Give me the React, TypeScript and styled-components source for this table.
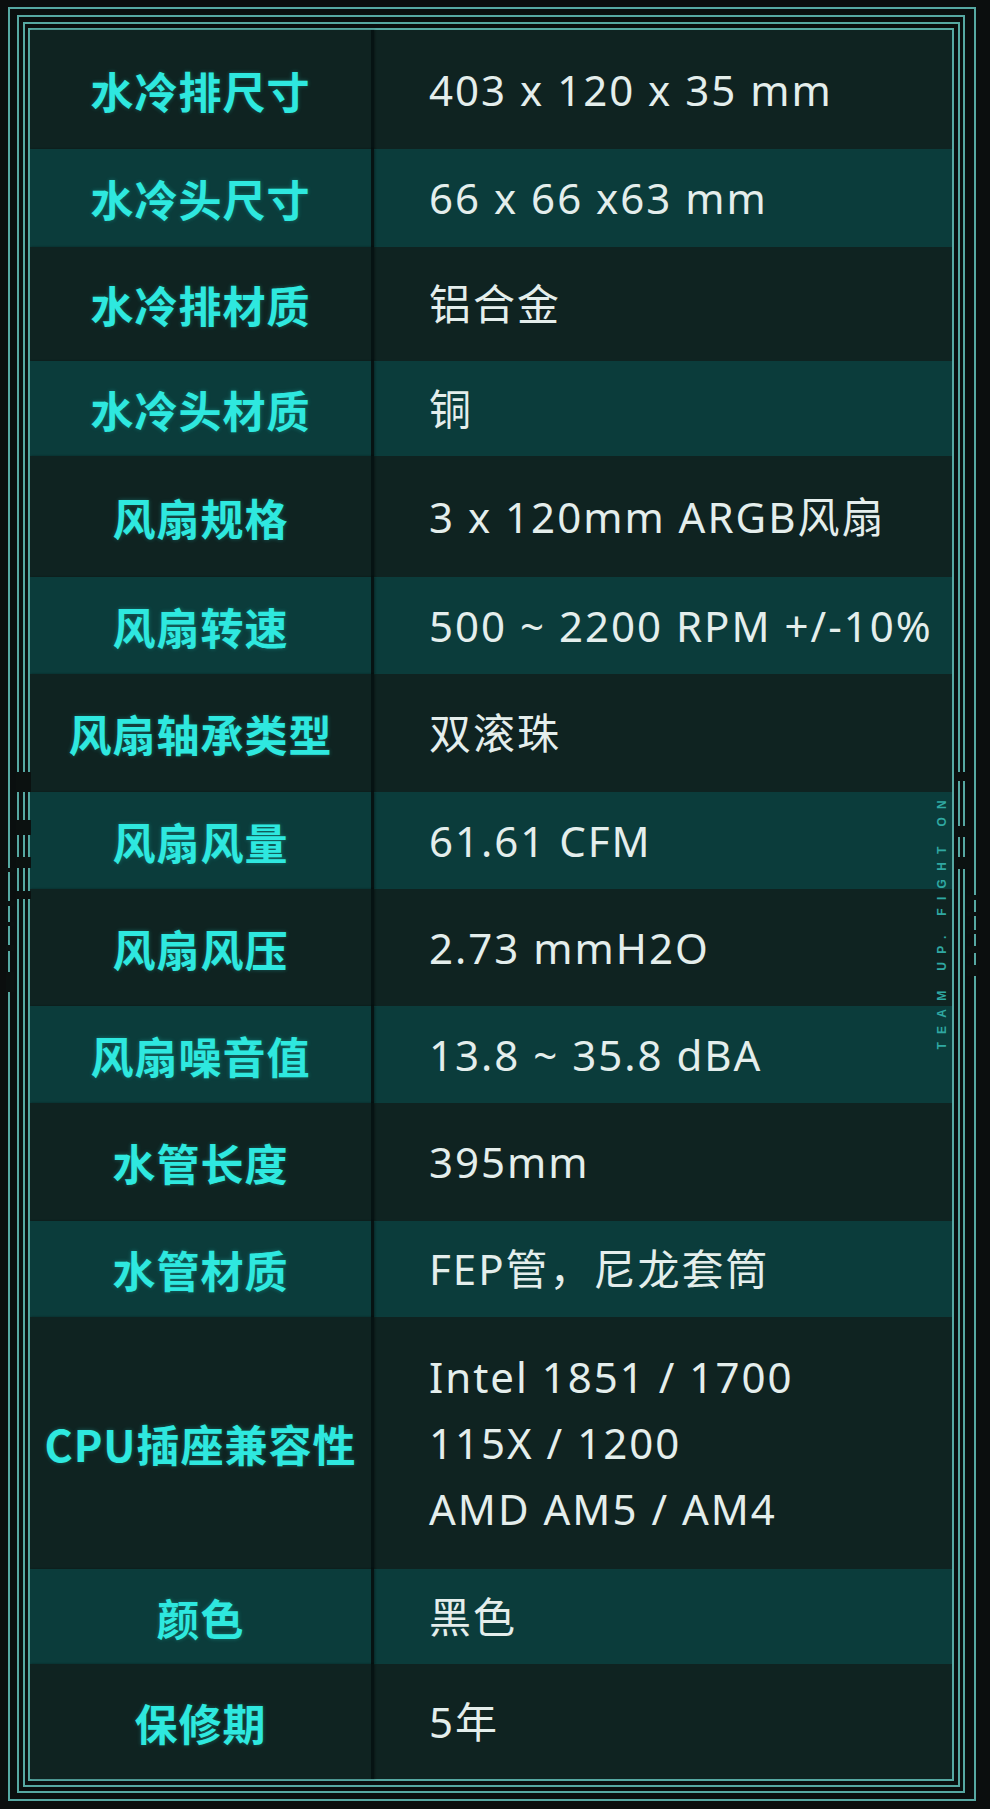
import React from "react";
import styled, { createGlobalStyle } from "styled-components";

interface SpecRow {
  label: string;
  value: string[];
  height: number;
}

const specs: SpecRow[] = [
  { label: "水冷排尺寸", value: ["403 x 120 x 35 mm"], height: 119 },
  { label: "水冷头尺寸", value: ["66 x 66 x63 mm"], height: 98 },
  { label: "水冷排材质", value: ["铝合金"], height: 114 },
  { label: "水冷头材质", value: ["铜"], height: 95 },
  { label: "风扇规格", value: ["3 x 120mm ARGB风扇"], height: 121 },
  { label: "风扇转速", value: ["500 ~ 2200 RPM +/-10%"], height: 97 },
  { label: "风扇轴承类型", value: ["双滚珠"], height: 118 },
  { label: "风扇风量", value: ["61.61 CFM"], height: 97 },
  { label: "风扇风压", value: ["2.73 mmH2O"], height: 117 },
  { label: "风扇噪音值", value: ["13.8 ~ 35.8 dBA"], height: 97 },
  { label: "水管长度", value: ["395mm"], height: 118 },
  { label: "水管材质", value: ["FEP管，尼龙套筒"], height: 96 },
  {
    label: "CPU插座兼容性",
    value: ["Intel 1851 / 1700", "115X / 1200", "AMD AM5 / AM4"],
    height: 252,
  },
  { label: "颜色", value: ["黑色"], height: 95 },
  { label: "保修期", value: ["5年"], height: 115 },
];

const GlobalStyle = createGlobalStyle`
  html, body {
    margin: 0;
    padding: 0;
    background: #0b0e0e;
  }
  * {
    box-sizing: border-box;
  }
`;

const Page = styled.div`
  position: relative;
  width: 990px;
  height: 1809px;
  padding: 7px 0 0 8px;
  background: #0b0e0e;
  overflow: hidden;
`;

const FrameLine = styled.div<{ $pad: string; $w?: number }>`
  border: 2px solid #56a8a2;
  padding: ${({ $pad }) => $pad};
  width: ${({ $w }) => ($w ? `${$w}px` : "auto")};
  background: #0a0f0f;
`;

const Table = styled.div`
  display: flex;
  flex-direction: column;
  width: 922px;
`;

const Row = styled.div<{ $alt: boolean; $h: number }>`
  display: grid;
  grid-template-columns: 344px 1fr;
  height: ${({ $h }) => $h}px;
  background: ${({ $alt }) => ($alt ? "#0b3c3b" : "#0f2321")};
`;

const LabelCell = styled.div`
  display: flex;
  align-items: center;
  justify-content: center;
  border-right: 3px solid #061313;
  box-shadow: 1px 0 2px rgba(0, 0, 0, 0.35);
  font-family: "Noto Sans CJK SC", "Noto Sans", sans-serif;
  font-weight: 700;
  font-size: 43px;
  letter-spacing: 1px;
  color: #2ee8df;
  text-shadow: 0 0 4px rgba(46, 232, 223, 0.3);
  white-space: nowrap;
`;

const ValueCell = styled.div`
  display: flex;
  flex-direction: column;
  justify-content: center;
  padding-left: 55px;
  font-family: "Noto Sans", "Noto Sans CJK SC", sans-serif;
  font-size: 42px;
  letter-spacing: 2px;
  color: #e4eeec;
  white-space: nowrap;
`;

const ValueLine = styled.div`
  line-height: 66px;
`;

const EdgeMark = styled.svg<{ $left: number }>`
  position: absolute;
  top: 760px;
  left: ${({ $left }) => $left}px;
`;

const Slogan = styled.div`
  position: absolute;
  left: 935px;
  top: 792px;
  writing-mode: vertical-rl;
  transform: rotate(180deg);
  font-family: "Liberation Sans", Arial, sans-serif;
  font-weight: 700;
  font-size: 12px;
  letter-spacing: 8.3px;
  color: #2fa8a2;
  white-space: nowrap;
`;

const mark = "#0b1110";

const LeftMarks = () => (
  <EdgeMark $left={0} width={40} height={260} viewBox="0 0 40 260">
    {/* notches over the inner lines */}
    <rect x={16} y={12} width={15} height={20} fill={mark} />
    <rect x={16} y={60} width={15} height={15} fill={mark} />
    <rect x={16} y={97} width={15} height={11} fill={mark} />
    <rect x={16} y={131} width={15} height={8} fill={mark} />
    {/* broken outer lines */}
    <rect x={6} y={108} width={8} height={4} fill={mark} />
    <rect x={6} y={141} width={8} height={5} fill={mark} />
    <rect x={6} y={162} width={8} height={4} fill={mark} />
    <rect x={6} y={185} width={8} height={6} fill={mark} />
    <rect x={6} y={212} width={8} height={20} fill={mark} />
  </EdgeMark>
);

const RightMarks = () => (
  <EdgeMark $left={952} width={30} height={260} viewBox="0 0 30 260">
    <rect x={3} y={12} width={15} height={9} fill={mark} />
    <rect x={3} y={66} width={15} height={11} fill={mark} />
    <rect x={3} y={97} width={15} height={12} fill={mark} />
    <rect x={15} y={135} width={10} height={5} fill={mark} />
    <rect x={15} y={152} width={10} height={4} fill={mark} />
    <rect x={15} y={170} width={10} height={4} fill={mark} />
    <rect x={15} y={186} width={10} height={7} fill={mark} />
    <rect x={15} y={205} width={10} height={11} fill={mark} />
  </EdgeMark>
);

const App: React.FC = (): JSX.Element => {
  return (
    <>
      <GlobalStyle />
      <Page>
        <FrameLine $pad="6px 9px 6px 7px" $w={968}>
          <FrameLine $pad="5px 3px 4px 4px">
            <FrameLine $pad="4px 4px 4px 3px">
              <FrameLine $pad="0">
                <Table>
                  {specs.map((row, i) => (
                    <Row key={row.label} $alt={i % 2 === 1} $h={row.height}>
                      <LabelCell>{row.label}</LabelCell>
                      <ValueCell>
                        {row.value.map((line) => (
                          <ValueLine key={line}>{line}</ValueLine>
                        ))}
                      </ValueCell>
                    </Row>
                  ))}
                </Table>
              </FrameLine>
            </FrameLine>
          </FrameLine>
        </FrameLine>
        <LeftMarks />
        <RightMarks />
        <Slogan>TEAM UP. FIGHT ON</Slogan>
      </Page>
    </>
  );
};

export default App;
